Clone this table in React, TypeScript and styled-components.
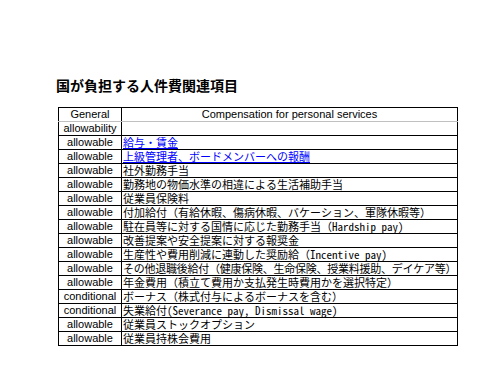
import React from "react";
import styled, { createGlobalStyle } from "styled-components";

const Global = createGlobalStyle`
  html, body { margin: 0; padding: 0; background: #ffffff; }
  body { width: 495px; height: 372px; overflow: hidden; }
`;

const Page = styled.div`
  display: flex;
  flex-direction: column;
  padding: 76px 0 0 56px;
`;

const Title = styled.h1`
  margin: 0;
  font-family: "Noto Sans CJK JP", sans-serif;
  font-weight: 700;
  font-size: 14px;
  line-height: 18px;
  height: 18px;
  color: #000;
`;

const Table = styled.table`
  margin: 13px 0 0 2px;
  border-collapse: collapse;
  table-layout: fixed;
  width: 400px;
  border: 1px solid #000;
`;

const Row = styled.tr<{ $h: number }>`
  height: ${(p) => p.$h}px;
`;

const Cell = styled.td<{ $gray?: boolean }>`
  padding: 0;
  border: 1px solid #000;
  ${(p) => (p.$gray ? "border-bottom-color: #c0c0c0;" : "")}
  vertical-align: bottom;
  overflow: visible;
  white-space: nowrap;
`;

const Label = styled(Cell)`
  width: 62px;
  text-align: center;
  font-family: "Liberation Sans", Arial, sans-serif;
  font-size: 11px;
  line-height: 13px;
  color: #000;
`;

const HeadText = styled(Cell)`
  text-align: center;
  font-family: "Liberation Sans", Arial, sans-serif;
  font-size: 11px;
  line-height: 13px;
  color: #000;
`;

const Item = styled(Cell)<{ $link?: boolean; $tight?: boolean }>`
  padding-left: 1px;
  font-family: "Noto Sans Mono CJK JP", "Noto Sans CJK JP", monospace;
  font-size: 11px;
  line-height: 13px;
  color: ${(p) => (p.$link ? "#0000ff" : "#000")};
  text-decoration: ${(p) => (p.$link ? "underline" : "none")};
  letter-spacing: ${(p) => (p.$tight ? "-0.25px" : "0")};
`;

type Entry = { kind: string; text: string; link?: boolean; tight?: boolean };

const rows: Entry[] = [
  { kind: "allowable", text: "給与・賃金", link: true },
  { kind: "allowable", text: "上級管理者、ボードメンバーへの報酬", link: true },
  { kind: "allowable", text: "社外勤務手当" },
  { kind: "allowable", text: "勤務地の物価水準の相違による生活補助手当" },
  { kind: "allowable", text: "従業員保険料" },
  { kind: "allowable", text: "付加給付（有給休暇、傷病休暇、バケーション、軍隊休暇等）" },
  { kind: "allowable", text: "駐在員等に対する国情に応じた勤務手当（Hardship pay)" },
  { kind: "allowable", text: "改善提案や安全提案に対する報奨金" },
  { kind: "allowable", text: "生産性や費用削減に連動した奨励給（Incentive pay)" },
  { kind: "allowable", text: "その他退職後給付（健康保険、生命保険、授業料援助、デイケア等）", tight: true },
  { kind: "allowable", text: "年金費用（積立て費用か支払発生時費用かを選択特定）" },
  { kind: "conditional", text: "ボーナス（株式付与によるボーナスを含む）" },
  { kind: "conditional", text: "失業給付(Severance pay, Dismissal wage)" },
  { kind: "allowable", text: "従業員ストックオプション" },
  { kind: "allowable", text: "従業員持株会費用" },
];

export default function App() {
  return (
    <>
      <Global />
      <Page>
        <Title>国が負担する人件費関連項目</Title>
        <Table>
          <tbody>
            <Row $h={14}>
              <Label $gray>General</Label>
              <HeadText $gray>Compensation for personal services</HeadText>
            </Row>
            <Row $h={14}>
              <Label>allowability</Label>
              <HeadText />
            </Row>
            {rows.map((r, i) => (
              <Row key={i} $h={i === 6 || i === 12 ? 13 : 14}>
                <Label>{r.kind}</Label>
                <Item $link={r.link} $tight={r.tight}>
                  {r.text}
                </Item>
              </Row>
            ))}
          </tbody>
        </Table>
      </Page>
    </>
  );
}
